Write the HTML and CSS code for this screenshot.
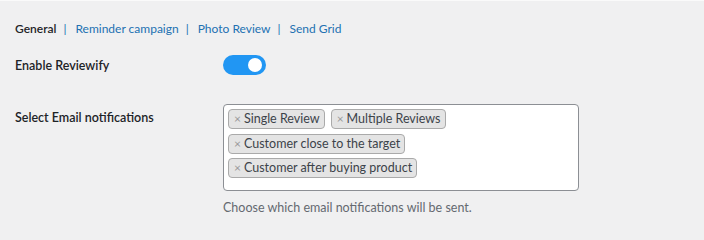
FILE: index.html
```html
<!DOCTYPE html>
<html>
<head>
    <title>Reviewify Settings</title>
    <link rel="stylesheet" href="styles.css">
</head>
<body>
    <div class="wrap">
        <ul class="tabs">
            <li><span class="current">General</span></li>
            <li class="sep">|</li>
            <li><a href="#">Reminder campaign</a></li>
            <li class="sep">|</li>
            <li><a href="#">Photo Review</a></li>
            <li class="sep">|</li>
            <li><a href="#">Send Grid</a></li>
        </ul>

        <div class="row row-toggle">
            <div class="label">Enable Reviewify</div>
            <div class="field">
                <label class="switch">
                    <input type="checkbox" checked>
                    <span class="slider"></span>
                </label>
            </div>
        </div>

        <div class="row row-select">
            <div class="label">Select Email notifications</div>
            <div class="field">
                <div class="multi-select">
                    <span class="tag"><span class="x">×</span>Single Review</span>
                    <span class="tag"><span class="x">×</span>Multiple Reviews</span>
                    <span class="tag"><span class="x">×</span>Customer close to the target</span>
                    <span class="tag"><span class="x">×</span>Customer after buying product</span>
                </div>
                <p class="description">Choose which email notifications will be sent.</p>
            </div>
        </div>
    </div>
</body>
</html>
```

FILE: styles.css
```css
body {
    margin: 0;
    padding: 0;
    background: #f0f0f1;
    border-top: 1px solid #fafafa;
    font-family: 'Lato', sans-serif;
    font-size: 12.5px;
    line-height: 20px;
    color: #1d2327;
}
.wrap {
    padding: 18px 15px 0 15px;
}
.tabs {
    list-style: none;
    margin: 0;
    padding: 0;
    display: flex;
    gap: 7px;
    font-size: 12px;
}
.tabs a {
    color: #2271b1;
    text-decoration: none;
}
.tabs .current {
    font-weight: 600;
    color: #1d2327;
}
.tabs .sep {
    color: #2271b1;
    padding: 0 2px 0 0;
}
.row {
    display: grid;
    grid-template-columns: 208px 356px;
}
.label {
    font-weight: 600;
    color: #1d2327;
    padding-top: 1px;
}
.row-toggle {
    margin-top: 16px;
}
.row-select {
    margin-top: 28px;
}
.row-select .label {
    padding-top: 4px;
}

/* toggle */
.switch {
    position: relative;
    display: inline-block;
    width: 43px;
    height: 20px;
    vertical-align: top;
}
.switch input {
    display: none;
}
.slider {
    position: absolute;
    inset: 0;
    background: #2196f3;
    border-radius: 10px;
    cursor: pointer;
}
.slider:before {
    content: "";
    position: absolute;
    width: 14px;
    height: 14px;
    right: 4px;
    top: 3px;
    background: #fff;
    border-radius: 50%;
}

/* select box with chosen items */
.multi-select {
    background: #fff;
    border: 1px solid #8c8f94;
    border-radius: 4px;
    padding: 4px 4px 12px 4px;
    display: flex;
    flex-wrap: wrap;
    column-gap: 6px;
    row-gap: 4.5px;
    box-sizing: border-box;
    height: 87px;
    align-content: flex-start;
}
.tag {
    background: #e4e4e4;
    border: 1px solid #aaa;
    border-radius: 4px;
    height: 20px;
    box-sizing: border-box;
    line-height: 18px;
    padding: 0 4px 0 5px;
    color: #3c434a;
    font-size: 12.5px;
}
.tag .x {
    color: #999;
    font-size: 12px;
    margin-right: 3px;
}
.description {
    margin: 7px 0 0 0;
    color: #646970;
}
```
